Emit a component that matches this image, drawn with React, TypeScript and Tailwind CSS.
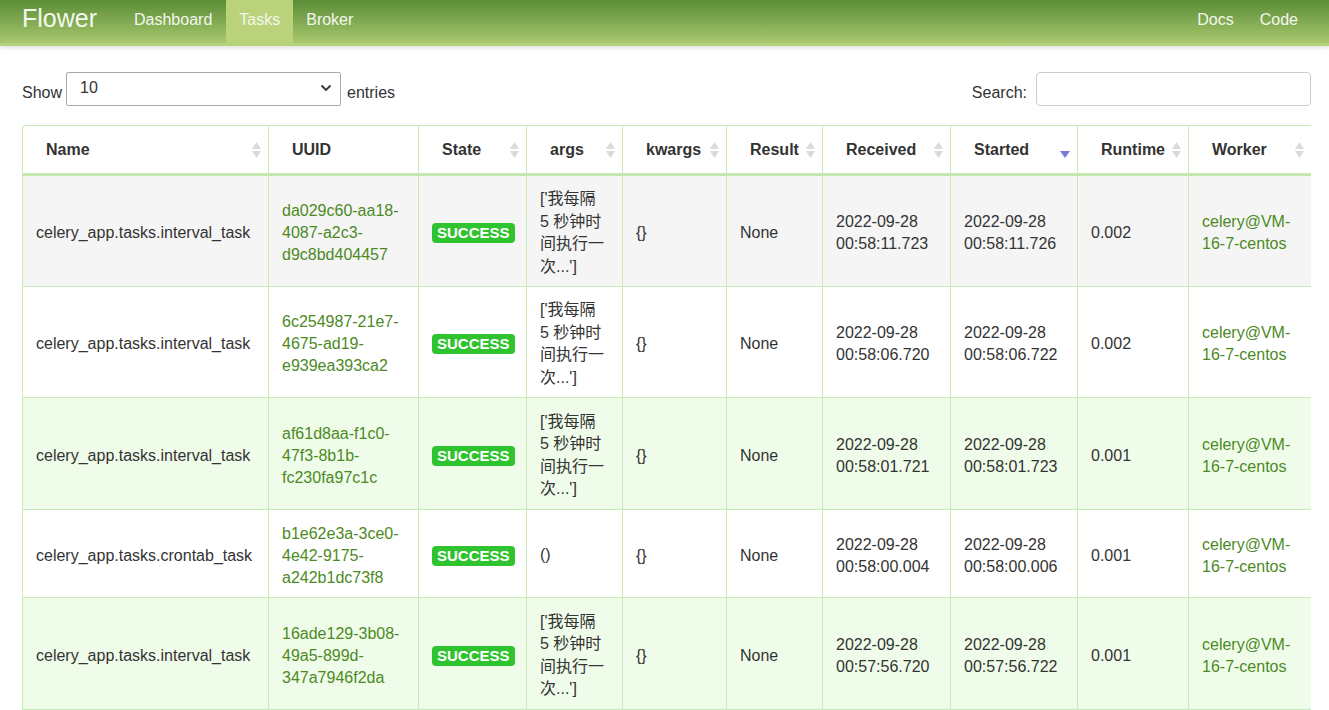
import React from 'react';

const FONT = '"Liberation Sans", Arial, "Noto Sans CJK SC", sans-serif';

interface Task {
  name: string;
  uuid: string[];
  args: string[];
  received: string[];
  started: string[];
  runtime: string;
  bg: string;
  h: string;
}

const ARGS = ["['我每隔", '5 秒钟时', '间执行一', "次...']"];

const tasks: Task[] = [
  {
    name: 'celery_app.tasks.interval_task',
    uuid: ['da029c60-aa18-', '4087-a2c3-', 'd9c8bd404457'],
    args: ARGS,
    received: ['2022-09-28', '00:58:11.723'],
    started: ['2022-09-28', '00:58:11.726'],
    runtime: '0.002',
    bg: 'bg-[#f5f5f5]',
    h: 'h-[111px]',
  },
  {
    name: 'celery_app.tasks.interval_task',
    uuid: ['6c254987-21e7-', '4675-ad19-', 'e939ea393ca2'],
    args: ARGS,
    received: ['2022-09-28', '00:58:06.720'],
    started: ['2022-09-28', '00:58:06.722'],
    runtime: '0.002',
    bg: 'bg-white',
    h: 'h-[111px]',
  },
  {
    name: 'celery_app.tasks.interval_task',
    uuid: ['af61d8aa-f1c0-', '47f3-8b1b-', 'fc230fa97c1c'],
    args: ARGS,
    received: ['2022-09-28', '00:58:01.721'],
    started: ['2022-09-28', '00:58:01.723'],
    runtime: '0.001',
    bg: 'bg-[#f0fcea]',
    h: 'h-[112px]',
  },
  {
    name: 'celery_app.tasks.crontab_task',
    uuid: ['b1e62e3a-3ce0-', '4e42-9175-', 'a242b1dc73f8'],
    args: ['()'],
    received: ['2022-09-28', '00:58:00.004'],
    started: ['2022-09-28', '00:58:00.006'],
    runtime: '0.001',
    bg: 'bg-white',
    h: 'h-[88px]',
  },
  {
    name: 'celery_app.tasks.interval_task',
    uuid: ['16ade129-3b08-', '49a5-899d-', '347a7946f2da'],
    args: ARGS,
    received: ['2022-09-28', '00:57:56.720'],
    started: ['2022-09-28', '00:57:56.722'],
    runtime: '0.001',
    bg: 'bg-[#f0fcea]',
    h: 'h-[112px]',
  },
];

const columns = [
  { label: 'Name', w: 'w-[246px]' },
  { label: 'UUID', w: 'w-[150px]', noSort: true },
  { label: 'State', w: 'w-[108px]' },
  { label: 'args', w: 'w-[96px]' },
  { label: 'kwargs', w: 'w-[104px]' },
  { label: 'Result', w: 'w-[96px]' },
  { label: 'Received', w: 'w-[128px]' },
  { label: 'Started', w: 'w-[127px]', sorted: true },
  { label: 'Runtime', w: 'w-[111px]' },
  { label: 'Worker', w: 'w-[123px]' },
];

const SortBoth = () => (
  <svg width="11" height="20" viewBox="0 0 11 20" className="absolute right-[6px] top-1/2 -translate-y-1/2">
    <polygon points="1,9 5.5,2 10,9" fill="#dadada" />
    <polygon points="1,11 5.5,18 10,11" fill="#dadada" />
  </svg>
);

const SortDesc = () => (
  <svg width="12" height="20" viewBox="0 0 12 20" className="absolute right-[6px] top-1/2 -translate-y-1/2">
    <polygon points="1,11 11,11 6,18" fill="#7b7bd9" />
  </svg>
);

const Lines = ({ lines }: { lines: string[] }) => (
  <>
    {lines.map((l, i) => (
      <span key={i} className="block whitespace-nowrap">{l}</span>
    ))}
  </>
);

export default function App() {
  const navLink = 'flex items-center h-full px-[13px] pb-[3px] text-[16px] text-[#f4f7ee]';
  const td = 'border-l border-b border-[#c9eab8] px-[13px] pt-[4px] align-middle';

  return (
    <div className="min-h-screen bg-white text-[#333]" style={{ fontFamily: FONT }}>
      {/* Navbar */}
      <nav className="h-[46px] flex items-stretch justify-between pl-[22px] pr-[18px] bg-gradient-to-b from-[#5b8d37] to-[#a8c86e] border-b-[3px] border-[#b5d27d] shadow-[0_2px_4px_rgba(0,0,0,0.12)]">
        <div className="flex items-stretch">
          <span className="flex items-center pb-[5px] text-[25px] text-[#f4f7ee] mr-[24px]">Flower</span>
          <a className={navLink}>Dashboard</a>
          <a className={`${navLink} bg-[#bad37b] ml-[1px]`}>Tasks</a>
          <a className={navLink}>Broker</a>
        </div>
        <div className="flex items-stretch">
          <a className={navLink}>Docs</a>
          <a className={navLink}>Code</a>
        </div>
      </nav>

      <div className="pl-[22px] pr-[18px]">
        {/* Controls */}
        <div className="flex items-center justify-between mt-[26px] text-[16px]">
          <div className="flex items-center">
            <span className="pt-[8px]">Show</span>
            <div className="ml-[4px] w-[275px] h-[34px] border border-[#aaa] rounded-[2px] flex items-center justify-between pl-[13px] pr-[8px] pb-[3px]">
              <span>10</span>
              <svg width="12" height="8" viewBox="0 0 12 8">
                <path d="M1.5 1.5 L6 6 L10.5 1.5" stroke="#333" strokeWidth="1.8" fill="none" />
              </svg>
            </div>
            <span className="ml-[6px] pt-[8px]">entries</span>
          </div>
          <div className="flex items-center">
            <span className="pt-[8px] mr-[9px]">Search:</span>
            <div className="w-[275px] h-[34px] border border-[#ccc] rounded-[4px]" />
          </div>
        </div>

        {/* Table */}
        <div className="mt-[19px] w-[1289px] overflow-hidden">
          <table className="table-fixed border-separate border-spacing-0 w-[1289px] text-[16px] leading-[22px]">
            <thead>
              <tr className="h-[51px]">
                {columns.map((c, i) => (
                  <th
                    key={c.label}
                    className={`${c.w} relative text-left font-bold pl-[23px] pr-[18px] border-t border-l border-b-[3px] border-[#c9eab8] border-b-[#c4e8b0] ${i === 0 ? 'rounded-tl-[4px]' : ''}`}
                  >
                    {c.label}
                    {c.sorted ? <SortDesc /> : c.noSort ? null : <SortBoth />}
                  </th>
                ))}
              </tr>
            </thead>
            <tbody>
              {tasks.map((t, i) => (
                <tr key={i} className={`${t.bg} ${t.h}`}>
                  <td className={td}>{t.name}</td>
                  <td className={`${td} text-[#4c8a1f]`}><Lines lines={t.uuid} /></td>
                  <td className={td}>
                    <span className="inline-block bg-[#2fc32f] text-white font-bold text-[15px] leading-[20px] px-[5px] rounded-[4px]">SUCCESS</span>
                  </td>
                  <td className={`${td} leading-[22.5px]`}><Lines lines={t.args} /></td>
                  <td className={td}>{'{}'}</td>
                  <td className={td}>None</td>
                  <td className={td}><Lines lines={t.received} /></td>
                  <td className={td}><Lines lines={t.started} /></td>
                  <td className={td}>{t.runtime}</td>
                  <td className={`${td} text-[#4c8a1f]`}><Lines lines={['celery@VM-', '16-7-centos']} /></td>
                </tr>
              ))}
            </tbody>
          </table>
        </div>
      </div>
    </div>
  );
}
